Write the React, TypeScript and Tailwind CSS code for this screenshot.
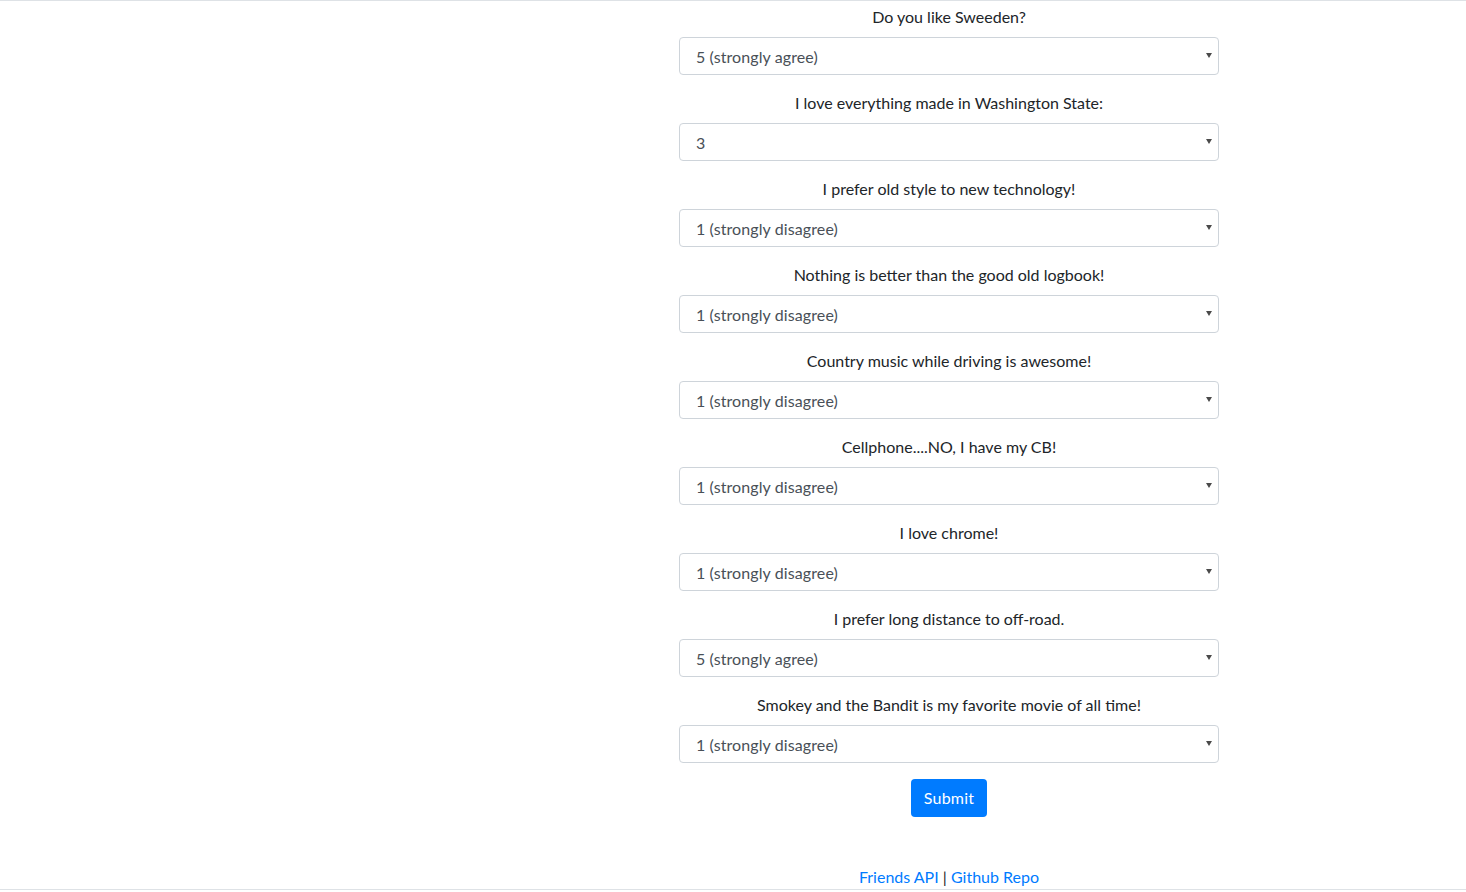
import { useState } from "react";

const questions = [
  { q: "Do you like Sweeden?", v: "5" },
  { q: "I love everything made in Washington State:", v: "3" },
  { q: "I prefer old style to new technology!", v: "1" },
  { q: "Nothing is better than the good old logbook!", v: "1" },
  { q: "Country music while driving is awesome!", v: "1" },
  { q: "Cellphone....NO, I have my CB!", v: "1" },
  { q: "I love chrome!", v: "1" },
  { q: "I prefer long distance to off-road.", v: "5" },
  { q: "Smokey and the Bandit is my favorite movie of all time!", v: "1" },
];

const options = [
  { value: "1", label: "1 (strongly disagree)" },
  { value: "2", label: "2" },
  { value: "3", label: "3" },
  { value: "4", label: "4" },
  { value: "5", label: "5 (strongly agree)" },
];

const Question = ({ q, initial }: { q: string; initial: string }) => {
  const [value, setValue] = useState(initial);
  return (
    <div className="mb-4">
      <label className="block text-center leading-6 mb-2 text-[#212529]">{q}</label>
      <div className="relative">
        <select
          value={value}
          onChange={(e) => setValue(e.target.value)}
          className="appearance-none w-full h-[38px] border border-[#ced4da] rounded bg-white pl-4 pr-8 pt-[2px] text-[#495057] leading-6 tracking-[0.1px] outline-none"
        >
          {options.map((o) => (
            <option key={o.value} value={o.value}>
              {o.label}
            </option>
          ))}
        </select>
        <svg
          className="absolute right-[7px] top-[16px] pointer-events-none"
          width="6"
          height="5"
          viewBox="0 0 6 5"
        >
          <path d="M0 0h6L3 5z" fill="#4a4a4a" />
        </svg>
      </div>
    </div>
  );
};

export default function App() {
  return (
    <div
      className="h-[892px] overflow-hidden bg-white border-t border-[#dee2e6] text-base"
      style={{ fontFamily: "Lato, 'Noto Sans', sans-serif" }}
    >
      <div className="ml-[679px] w-[540px] pt-1">
        {questions.map((item) => (
          <Question key={item.q} q={item.q} initial={item.v} />
        ))}
        <div className="flex justify-center">
          <button className="h-[38px] px-[13px] rounded bg-[#007bff] text-white leading-6 tracking-[0.2px]">
            Submit
          </button>
        </div>
      </div>
      <footer className="mt-12 border-b border-[#dee2e6]">
        <div className="ml-[679px] w-[540px] text-center leading-6 text-[#212529]">
          <a href="#" className="text-[#007bff]">Friends API</a> |{" "}
          <a href="#" className="text-[#007bff]">Github Repo</a>
        </div>
      </footer>
    </div>
  );
}
